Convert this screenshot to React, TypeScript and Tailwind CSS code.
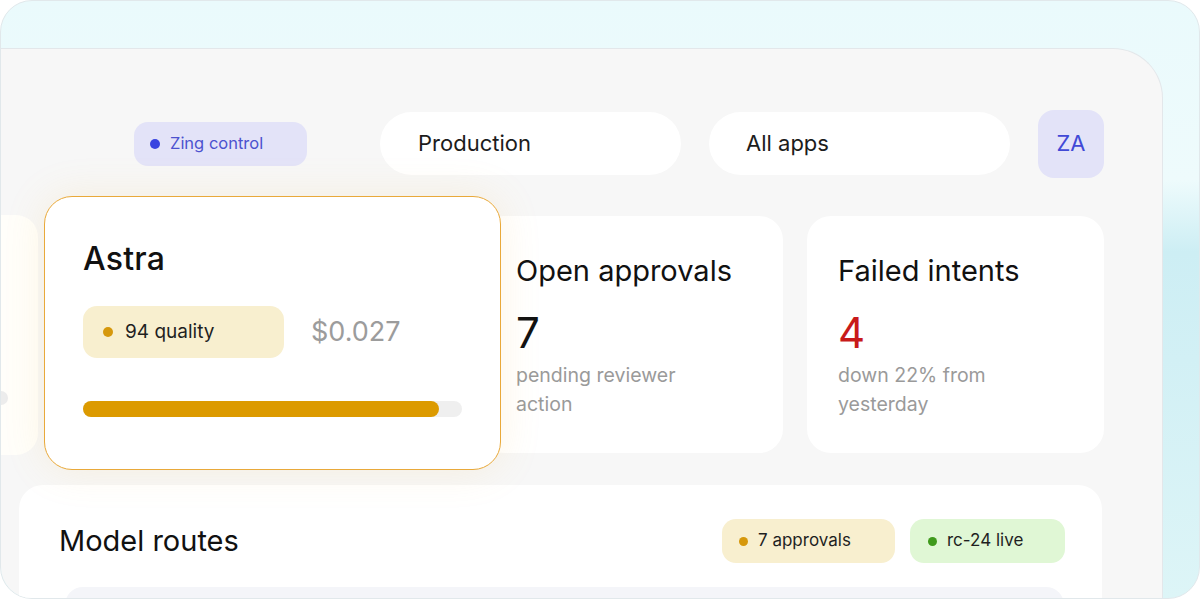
import React from "react";

function Pill({ bg, dot, color, children, className = "" }: { bg: string; dot: string; color: string; children: React.ReactNode; className?: string }) {
  return (
    <div className={`flex items-center h-[44px] rounded-[14px] pl-[17px] ${bg} ${className}`}>
      <span className={`w-[9px] h-[9px] rounded-full ${dot}`} />
      <span className={`ml-[10px] text-[17px] ${color}`}>{children}</span>
    </div>
  );
}

export default function App() {
  return (
    <div className="w-[1200px] h-[599px] overflow-hidden font-['Inter',sans-serif]">
      <div className="relative w-[1200px] h-[599px] overflow-hidden rounded-[32px] border border-[#e1e8eb] bg-[linear-gradient(180deg,#eafafc_0%,#eefbfc_30%,#cdeef4_42%,#d2f0f5_60%,#ddf5f7_100%)]">
        <div className="mt-[47px] ml-[-1px] w-[1163px] h-[560px] rounded-tr-[50px] border-t border-r border-[#e3e7ea] bg-[#f7f7f7] overflow-hidden">
          {/* header */}
          <div className="flex items-center pt-[60px] pl-[134px] h-[129px]">
            <div className="flex items-center w-[173px] h-[44px] rounded-[14px] bg-[#e3e3f8] pl-[16px]">
              <span className="w-[10px] h-[10px] rounded-full bg-[#3944e0]" />
              <span className="ml-[10px] text-[16.5px] text-[#4c52cf]">Zing control</span>
            </div>
            <div className="ml-[73px] flex items-center w-[301px] h-[63px] rounded-full bg-white pl-[38px] text-[22px] text-[#1c1c1c]">Production</div>
            <div className="ml-[28px] flex items-center w-[301px] h-[63px] rounded-full bg-white pl-[37px] text-[22px] text-[#1c1c1c]">All apps</div>
            <div className="ml-[28px] flex items-center justify-center w-[66px] h-[68px] rounded-[16px] bg-[#e3e3f8] text-[22px] text-[#4149d6]">ZA</div>
          </div>

          {/* cards row */}
          <div className="mt-[18px] flex items-start h-[274px]">
            <div className="mt-[19px] ml-[-262px] w-[300px] h-[240px] rounded-[22px] bg-[#fffefa] flex flex-col justify-end pb-[50px] pr-[30px] pl-[20px] shrink-0">
              <div className="h-[14px] rounded-full bg-[#ececec]" />
            </div>
            <div className="relative z-10 ml-[6px] w-[457px] h-[274px] shrink-0 rounded-[28px] border border-[#e9a93a] bg-white shadow-[0_0_40px_rgba(240,190,80,0.15)] pl-[38px] pr-[38px] pt-[42px]">
              <div className="text-[32px] leading-[40px] text-[#111] font-medium tracking-[0.2px]">Astra</div>
              <div className="mt-[27px] flex items-center">
                <div className="flex items-center w-[201px] h-[52px] rounded-[14px] bg-[#f8efcf] pl-[20px]">
                  <span className="w-[10px] h-[10px] rounded-full bg-[#d6980c]" />
                  <span className="ml-[12px] text-[19px] text-[#1f1f1f]">94 quality</span>
                </div>
                <span className="ml-[27px] text-[27px] text-[#9c9c9c]">$0.027</span>
              </div>
              <div className="mt-[43px] h-[16px] rounded-full bg-[#efefef]">
                <div className="h-[16px] w-[94%] rounded-full bg-[#dc9a00]" />
              </div>
            </div>
            <div className="mt-[20px] ml-[-21px] w-[303px] h-[237px] shrink-0 rounded-[24px] bg-white pl-[36px] pt-[37px]">
              <div className="text-[29px] leading-[36px] text-[#111]">Open approvals</div>
              <div className="mt-[21px] text-[42px] leading-[46px] text-[#111]">7</div>
              <div className="mt-[5px] text-[19.5px] leading-[29px] text-[#9a9a9a]">pending reviewer<br />action</div>
            </div>
            <div className="mt-[20px] ml-[24px] w-[297px] h-[237px] shrink-0 rounded-[24px] bg-white pl-[31px] pt-[37px]">
              <div className="text-[29px] leading-[36px] text-[#111]">Failed intents</div>
              <div className="mt-[21px] text-[42px] leading-[46px] text-[#c81a1a]">4</div>
              <div className="mt-[5px] text-[19.5px] leading-[29px] text-[#9a9a9a]">down 22% from<br />yesterday</div>
            </div>
          </div>

          {/* model routes */}
          <div className="mt-[15px] ml-[19px] w-[1083px] h-[140px] rounded-[24px] bg-white pt-[34px] px-[40px]">
            <div className="flex items-center h-[44px]">
              <div className="text-[29px] text-[#111]">Model routes</div>
              <div className="ml-auto mr-[-3px] flex items-center gap-[15px]">
                <Pill bg="bg-[#f8efcf]" dot="bg-[#d6980c]" color="text-[#1f1f1f]" className="w-[173px] pl-[17px]">7 approvals</Pill>
                <Pill bg="bg-[#e0f7d5]" dot="bg-[#3f9a1c]" color="text-[#1f1f1f]" className="w-[155px] pl-[18px]">rc-24 live</Pill>
              </div>
            </div>
            <div className="mt-[24px] ml-[6px] mr-[-2px] h-[40px] rounded-t-[18px] bg-[#f4f5f9]" />
          </div>
        </div>
      </div>
    </div>
  );
}
